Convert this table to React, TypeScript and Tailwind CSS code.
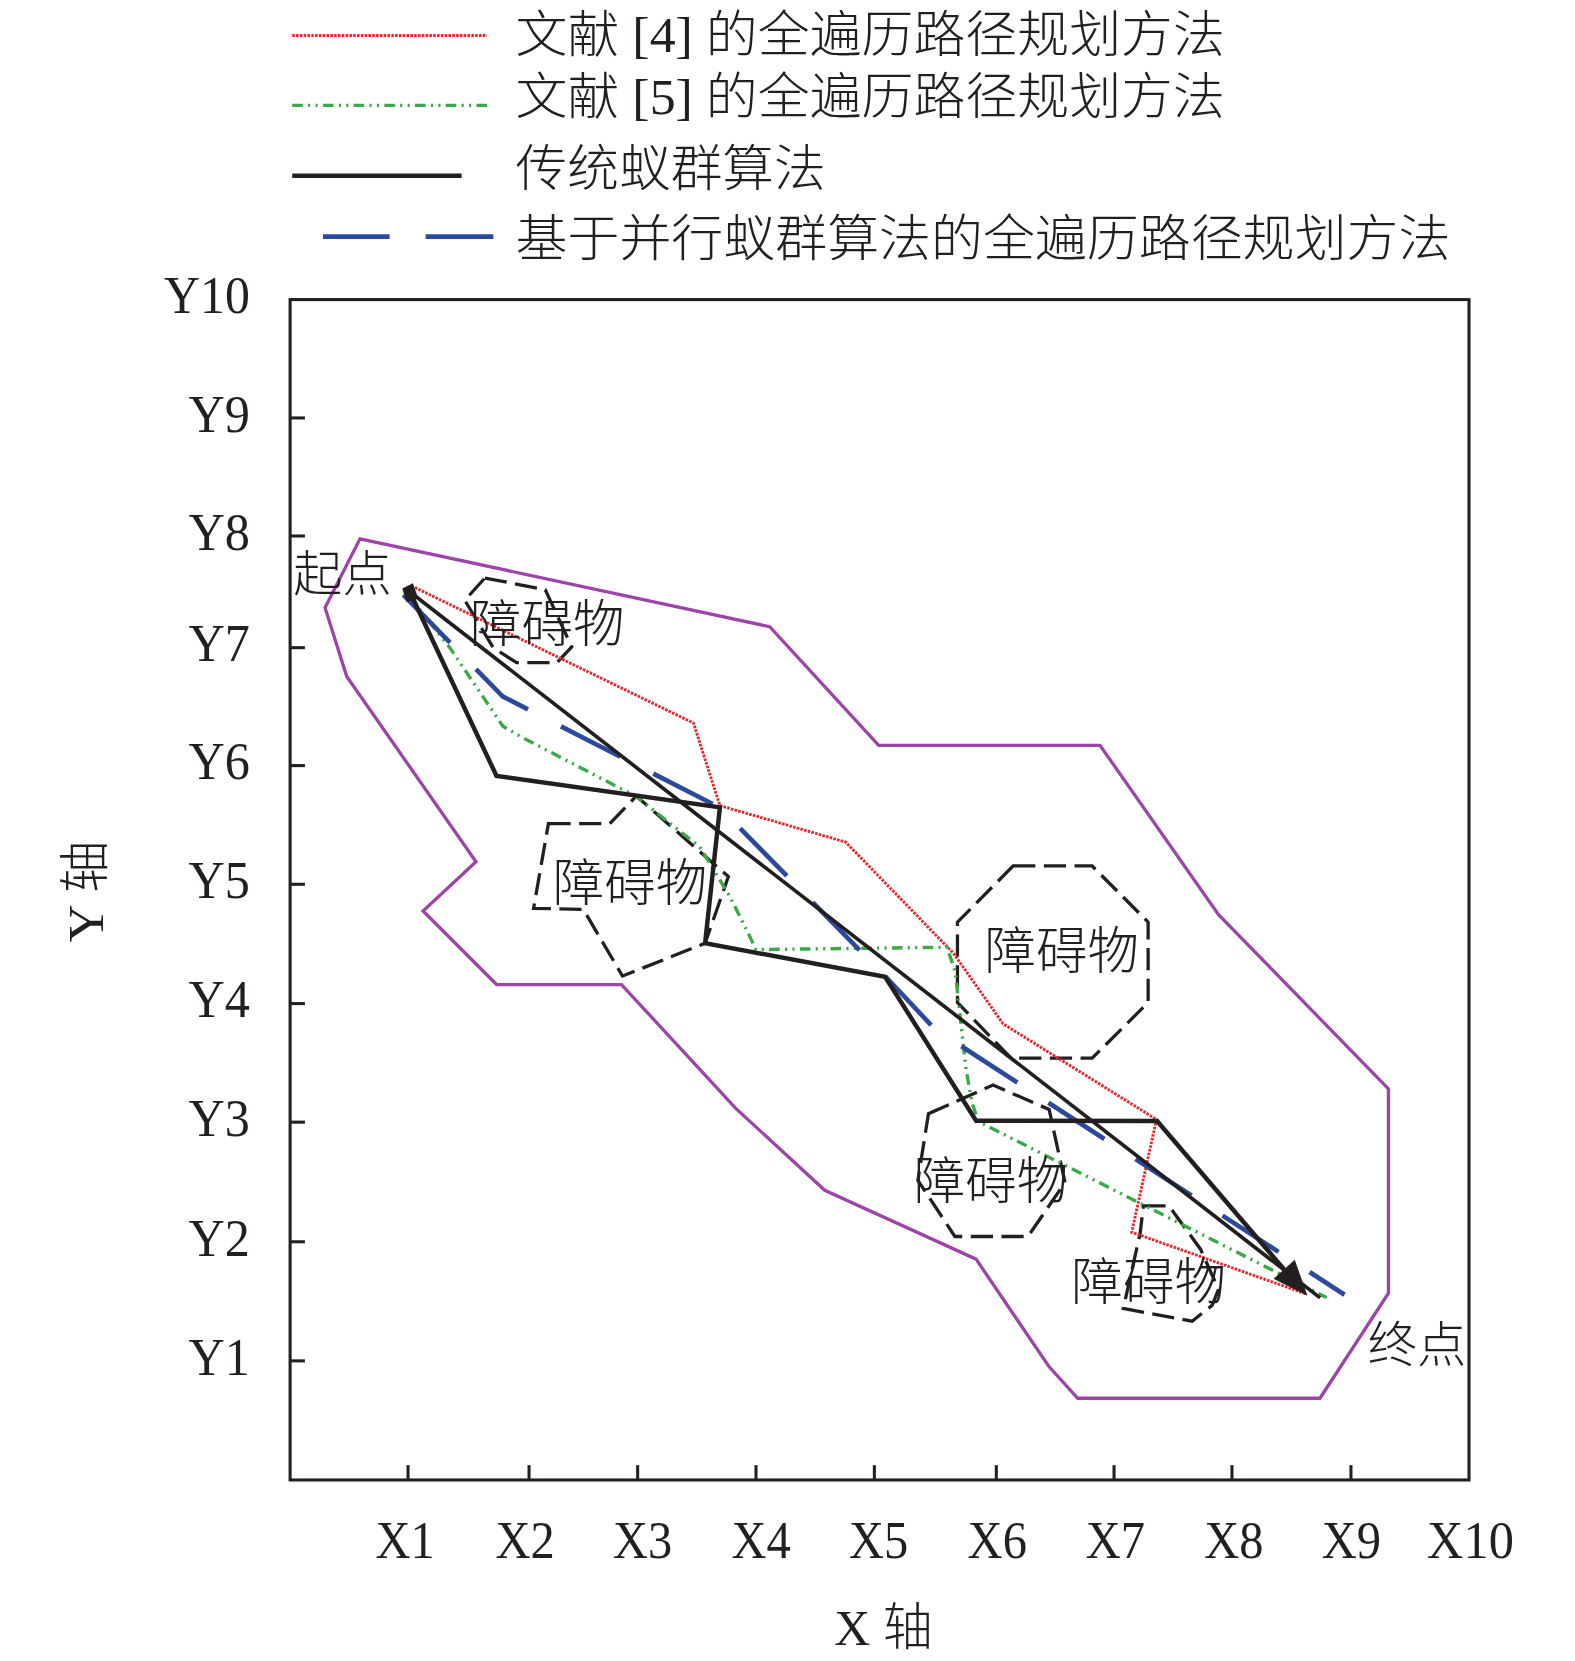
import React from "react";

const FONT = "'Liberation Serif', 'Noto Sans CJK SC', serif";
const INK = "#231f20";

const pts = (a: number[][]) => a.map((p) => p.join(",")).join(" ");

const yTicks: [string, number][] = [
  ["Y9", 394.8],
  ["Y8", 506.3],
  ["Y7", 611.8],
  ["Y6", 723.2],
  ["Y5", 835.3],
  ["Y4", 948],
  ["Y3", 1060],
  ["Y2", 1173],
  ["Y1", 1285.5],
];

const xTicks: [string, number, number][] = [
  ["X1", 385.4, 382.6],
  ["X2", 499.7, 496],
  ["X3", 602.3, 607],
  ["X4", 714.1, 719],
  ["X5", 825.9, 830],
  ["X6", 941.1, 942],
  ["X7", 1052.3, 1053.5],
  ["X8", 1163.7, 1165.5],
  ["X9", 1276.1, 1276.5],
];

const purple = [
  [340, 509],
  [727, 592],
  [830, 704],
  [1039, 704],
  [1151, 864],
  [1311.5, 1028.5],
  [1311.5, 1221.6],
  [1246.8, 1320.8],
  [1018, 1320.8],
  [990.6, 1290.6],
  [922, 1189.4],
  [779, 1124.4],
  [695, 1047],
  [587, 930],
  [469, 930],
  [399.6, 860.5],
  [449.6, 814],
  [327.5, 639],
  [307, 574],
];

const obstacles = [
  [
    [458, 546],
    [515, 557],
    [540, 611],
    [526, 626],
    [488, 626],
    [466, 612],
    [439, 567],
  ],
  [
    [518, 778],
    [576, 778],
    [601, 752],
    [688, 828],
    [666, 891],
    [588, 922],
    [551, 859],
    [504, 858],
  ],
  [
    [957, 818],
    [1031.6, 818],
    [1084.5, 871],
    [1084.5, 947],
    [1031.6, 999.6],
    [955, 999.6],
    [904.4, 947],
    [904.4, 871],
  ],
  [
    [877, 1052],
    [938, 1025],
    [991, 1048],
    [1006, 1117],
    [971, 1168],
    [902, 1168],
    [867, 1115],
  ],
  [
    [1080, 1139],
    [1104, 1139],
    [1134, 1180],
    [1151, 1218],
    [1145, 1233],
    [1126, 1248],
    [1061, 1236],
    [1077, 1165],
  ],
];

const redPath = [
  [392, 555],
  [655, 683],
  [680, 761],
  [798.7, 795.4],
  [900.5, 900.3],
  [947.5, 967.1],
  [1092.4, 1057.5],
  [1069, 1164],
  [1233, 1222],
];

const greenPath = [
  [387, 563.6],
  [425, 612],
  [475, 686],
  [494, 697],
  [601, 752.5],
  [661, 800],
  [689.5, 847],
  [708.4, 885],
  [714, 897],
  [894.6, 894.8],
  [902.4, 918.3],
  [912.3, 1008.7],
  [918, 1041],
  [924, 1059.3],
  [1253, 1225.6],
];

const bluePath = [
  [381, 562],
  [475, 658],
  [680, 763],
  [836, 922],
  [883, 972],
  [1270, 1223],
];

const blackPath = [
  [387, 559],
  [469, 733],
  [680, 762.6],
  [666, 891],
  [836, 922.6],
  [922, 1058.6],
  [1093, 1059],
  [1224, 1212],
];

const obstacleLabels: [number, number][] = [
  [444, 606],
  [522, 851],
  [930, 915.7],
  [863, 1132.6],
  [1012, 1228.4],
];

export default function App() {
  return (
    <div className="w-[1575px] h-[1661px] bg-white">
      <svg
        width={1575}
        height={1661}
        viewBox="0 0 1487.7 1569"
        xmlns="http://www.w3.org/2000/svg"
        className="block"
      >
        {/* Legend */}
        <g fontFamily={FONT} fontSize={47} fill={INK} fontWeight={300}>
          <line x1={276} y1={33.5} x2={460} y2={33.5} stroke="#e5262c" strokeWidth={2.8} strokeDasharray="2.4 1.2" />
          <text x={487} y={49.4} textLength={670} lengthAdjust="spacingAndGlyphs">
            文献 [4] 的全遍历路径规划方法
          </text>
          <line x1={276} y1={99.5} x2={462} y2={99.5} stroke="#3aa948" strokeWidth={3.2} strokeDasharray="10 5 2 5 2 5" />
          <text x={487} y={107.6} textLength={670} lengthAdjust="spacingAndGlyphs">
            文献 [5] 的全遍历路径规划方法
          </text>
          <line x1={276} y1={166} x2={436} y2={166} stroke={INK} strokeWidth={4.2} />
          <text x={487} y={175.4} textLength={293} lengthAdjust="spacingAndGlyphs">
            传统蚁群算法
          </text>
          <line x1={305} y1={223.5} x2={368} y2={223.5} stroke="#2c4a9c" strokeWidth={4.5} />
          <line x1={402} y1={223.5} x2={466} y2={223.5} stroke="#2c4a9c" strokeWidth={4.5} />
          <text x={487} y={241.4} textLength={883} lengthAdjust="spacingAndGlyphs">
            基于并行蚁群算法的全遍历路径规划方法
          </text>
        </g>

        {/* Axes box */}
        <rect x={274} y={283} width={1113.6} height={1115} fill="none" stroke={INK} strokeWidth={2.9} />

        {/* Y ticks & labels */}
        <g fontFamily={FONT} fontSize={50} fill={INK}>
          <text x={236} y={296} textAnchor="end" textLength={81} lengthAdjust="spacingAndGlyphs">
            Y10
          </text>
          {yTicks.map(([l, y]) => (
            <g key={l}>
              <line x1={274} y1={y} x2={288} y2={y} stroke={INK} strokeWidth={2.9} />
              <text x={236} y={y + 13} textAnchor="end" textLength={58} lengthAdjust="spacingAndGlyphs">
                {l}
              </text>
            </g>
          ))}
          {xTicks.map(([l, x, lx]) => (
            <g key={l}>
              <line x1={x} y1={1398} x2={x} y2={1384} stroke={INK} strokeWidth={2.9} />
              <text x={lx} y={1472} textAnchor="middle" textLength={56} lengthAdjust="spacingAndGlyphs">
                {l}
              </text>
            </g>
          ))}
          <text x={1389} y={1472} textAnchor="middle" textLength={82} lengthAdjust="spacingAndGlyphs">
            X10
          </text>
        </g>

        {/* Axis titles */}
        <g fontFamily={FONT} fontSize={48} fill={INK} fontWeight={300}>
          <text x={788} y={1554} textLength={93} lengthAdjust="spacingAndGlyphs">
            X 轴
          </text>
          <text
            transform="translate(80 842) rotate(-90)"
            x={0}
            y={17}
            textAnchor="middle"
            textLength={96}
            lengthAdjust="spacingAndGlyphs"
          >
            Y 轴
          </text>
        </g>

        {/* Purple region */}
        <polygon points={pts(purple)} fill="none" stroke="#9c44a7" strokeWidth={3.1} strokeLinejoin="miter" />

        {/* Obstacles */}
        {obstacles.map((o, i) => (
          <polygon
            key={i}
            points={pts(o)}
            fill="none"
            stroke={INK}
            strokeWidth={3.1}
            strokeDasharray="21 8"
          />
        ))}

        {/* Paths */}
        <polyline points={pts(redPath)} fill="none" stroke="#e5262c" strokeWidth={2.7} strokeDasharray="2.4 1.2" />
        <polyline points={pts(greenPath)} fill="none" stroke="#3aa948" strokeWidth={3.2} strokeDasharray="10 5 2 5 2 5" />
        <polyline points={pts(bluePath)} fill="none" stroke="#2c4a9c" strokeWidth={4.4} strokeDasharray="63 35" />
        <line x1={387} y1={559} x2={1247} y2={1226} stroke={INK} strokeWidth={3.5} />
        <polyline points={pts(blackPath)} fill="none" stroke={INK} strokeWidth={4.2} strokeLinejoin="miter" />
        <polygon points="1235,1224 1203,1208 1223,1190" fill={INK} />
        <polygon points="380,556 390,551 395,565 384,569" fill={INK} />

        {/* Plot texts */}
        <g fontFamily={FONT} fill={INK} fontWeight={300}>
          <text x={277} y={558} fontSize={46} textLength={93} lengthAdjust="spacingAndGlyphs">
            起点
          </text>
          <text x={1292} y={1287} fontSize={46} textLength={93} lengthAdjust="spacingAndGlyphs">
            终点
          </text>
          {obstacleLabels.map(([x, y], i) => (
            <text key={i} x={x} y={y} fontSize={48} textLength={146} lengthAdjust="spacingAndGlyphs">
              障碍物
            </text>
          ))}
        </g>
      </svg>
    </div>
  );
}
